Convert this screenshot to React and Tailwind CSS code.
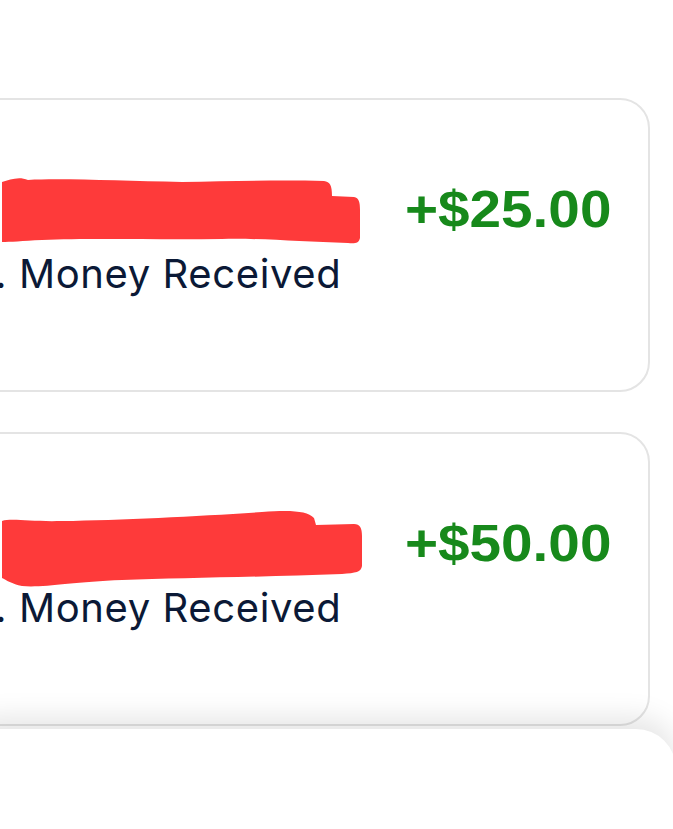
import React from 'react'

const scribbles = [
  // rough red marker strokes hiding the sender's name
  'M0 6 C8 4 16 0 26 4 C60 2 120 5 180 6 C230 5 280 4 322 5 C328 6 330 9 330 20 L352 21 C357 22 358 26 358 34 L358 62 C357 67 353 68 346 67 C300 66 260 62 220 63 C160 64 90 62 40 64 C20 65 8 66 0 66 Z',
  'M0 11 C10 8 30 12 60 11 C120 10 200 6 260 2 C290 0 305 1 312 8 L314 15 L352 14 C358 14 360 18 360 26 L360 56 C359 62 354 63 340 64 C260 67 180 68 120 70 C70 72 40 78 20 76 C10 74 4 70 0 68 Z',
]

function Card({ amount, scribble }) {
  return (
    <div className="ml-[-40px] w-[690px] h-[294px] rounded-[30px] border-2 border-[#e4e4e4] bg-white flex justify-between pl-[40px] pr-[37px] pt-[76px]">
      <div className="flex flex-col">
        <svg width="360" height="78" viewBox="0 0 360 78" className="block">
          <path d={scribble} fill="#fe3a3a" />
        </svg>
        <p className="ml-[-7px] text-[40px] leading-none tracking-[0.6px] text-[#0b1936] font-['Inter','Liberation_Sans',sans-serif] whitespace-nowrap">
          . Money Received
        </p>
      </div>
      <div className="mt-[7px]">
        <p className="inline-block origin-right scale-x-[1.09] text-[52px] leading-none font-bold text-[#17891b] font-['Liberation_Sans','Arial',sans-serif]">
          {amount}
        </p>
      </div>
    </div>
  )
}

export default function App() {
  return (
    <div className="w-[673px] h-[829px] overflow-hidden bg-white">
      <div className="flex flex-col pt-[98px]">
        <Card amount="+$25.00" scribble={scribbles[0]} />
        <div className="mt-[40px]">
          <Card amount="+$50.00" scribble={scribbles[1]} />
        </div>
        <div className="relative mt-[3px] ml-[-40px] w-[716px] h-[200px] rounded-[40px] bg-white shadow-[0_-12px_28px_rgba(0,0,0,0.1)]" />
      </div>
    </div>
  )
}
